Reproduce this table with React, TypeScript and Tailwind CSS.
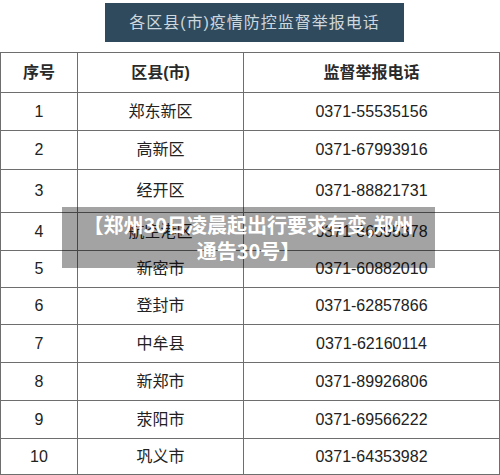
import React from "react";

const rows: { n: string; area: string; phone: string; h: string }[] = [
  { n: "1", area: "郑东新区", phone: "0371-55535156", h: "h-[38px]" },
  { n: "2", area: "高新区", phone: "0371-67993916", h: "h-[39px]" },
  { n: "3", area: "经开区", phone: "0371-88821731", h: "h-[43px]" },
  { n: "4", area: "航空港区", phone: "0371-86095378", h: "h-[38px]" },
  { n: "5", area: "新密市", phone: "0371-60882010", h: "h-[37px]" },
  { n: "6", area: "登封市", phone: "0371-62857866", h: "h-[37px]" },
  { n: "7", area: "中牟县", phone: "0371-62160114", h: "h-[38px]" },
  { n: "8", area: "新郑市", phone: "0371-89926806", h: "h-[38px]" },
  { n: "9", area: "荥阳市", phone: "0371-69566222", h: "h-[38px]" },
  { n: "10", area: "巩义市", phone: "0371-64353982", h: "h-[36px]" },
];

const font = { fontFamily: '"Liberation Sans", "Noto Sans CJK SC", sans-serif' };

export default function App() {
  return (
    <div
      className="relative w-[500px] h-[475px] overflow-hidden bg-white text-[#222]"
      style={font}
    >
      <div className="pt-[3px] pl-[105px]">
        <div className="w-[299px] h-[39px] bg-[#2f4a5d] flex items-center justify-center text-[16px] tracking-[1px] text-[#cdd7de]">
          各区县(市)疫情防控监督举报电话
        </div>
      </div>
      <div className="mt-[10px] w-[500px] border-t border-l border-[#6e6e6e]">
        <div className="flex h-[40px] border-b border-[#6e6e6e] text-[16px] font-semibold text-[#2a2a2a]">
          <div className="w-[77px] border-r border-[#6e6e6e] flex items-center justify-center">序号</div>
          <div className="w-[166px] border-r border-[#6e6e6e] flex items-center justify-center">区县(市)</div>
          <div className="w-[256px] border-r border-[#6e6e6e] flex items-center justify-center">监督举报电话</div>
        </div>
        {rows.map((r) => (
          <div
            key={r.n}
            className={`flex border-b border-[#6e6e6e] text-[16px] ${r.h}`}
          >
            <div className="w-[77px] border-r border-[#6e6e6e] flex items-center justify-center">{r.n}</div>
            <div className="w-[166px] border-r border-[#6e6e6e] flex items-center justify-center">{r.area}</div>
            <div className="w-[256px] border-r border-[#6e6e6e] flex items-center justify-center">{r.phone}</div>
          </div>
        ))}
      </div>
      <div
        className="absolute left-[62px] top-[207px] w-[373px] h-[61px] bg-[rgba(0,0,0,0.36)] flex flex-col items-center justify-center text-white font-bold text-[20px] leading-[26px]"
        style={{ fontFamily: '"Noto Sans CJK SC", sans-serif' }}
      >
        <div className="whitespace-nowrap">【郑州30日凌晨起出行要求有变,郑州</div>
        <div className="whitespace-nowrap">通告30号】</div>
      </div>
    </div>
  );
}
